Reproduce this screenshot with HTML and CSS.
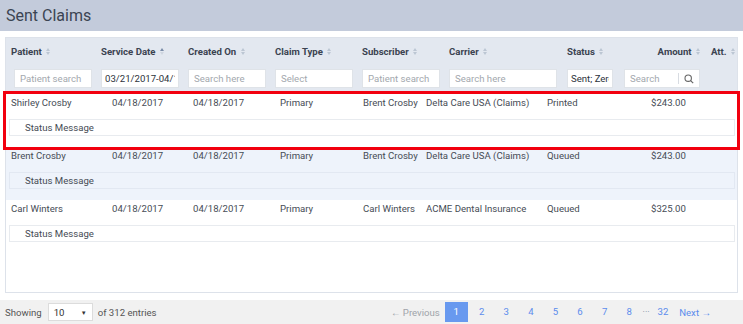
FILE: index.html
```html
<!DOCTYPE html>
<html lang="en">
<head>
    <meta charset="UTF-8">
    <meta name="viewport" content="width=device-width, initial-scale=1.0">
    <title>Sent Claims</title>
    <link rel="stylesheet" href="styles.css">
</head>
<body>
    <div class="page-title">Sent Claims</div>

    <div class="claims-panel">
        <div class="claims-head">
            <div class="head-cols">
                <div class="col-label">Patient <span class="sort"></span></div>
                <div class="col-label">Service Date <span class="sort asc"></span></div>
                <div class="col-label">Created On <span class="sort"></span></div>
                <div class="col-label">Claim Type <span class="sort"></span></div>
                <div class="col-label">Subscriber <span class="sort"></span></div>
                <div class="col-label">Carrier <span class="sort"></span></div>
                <div class="col-label">Status <span class="sort"></span></div>
                <div class="col-label right">Amount <span class="sort"></span></div>
                <div class="col-label">Att. <span class="sort"></span></div>
            </div>
            <div class="head-cols filters">
                <div><input class="first" type="text" placeholder="Patient search"></div>
                <div><input class="filled" type="text" value="03/21/2017-04/18/2017"></div>
                <div><input type="text" placeholder="Search here"></div>
                <div><input type="text" placeholder="Select"></div>
                <div><input type="text" placeholder="Patient search"></div>
                <div><input type="text" placeholder="Search here"></div>
                <div><input class="filled" type="text" value="Sent; Zero"></div>
                <div class="search-box">
                    <span>Search</span>
                    <svg width="10" height="10" viewBox="0 0 10 10"><circle cx="4.2" cy="4.2" r="3.2" fill="none" stroke="#666" stroke-width="1.1"/><line x1="6.6" y1="6.6" x2="9.2" y2="9.2" stroke="#666" stroke-width="1.2"/></svg>
                </div>
                <div></div>
            </div>
        </div>

        <div class="claim-row selected">
            <div class="row-cols">
                <div>Shirley Crosby</div>
                <div>04/18/2017</div>
                <div>04/18/2017</div>
                <div>Primary</div>
                <div>Brent Crosby</div>
                <div>Delta Care USA (Claims)</div>
                <div>Printed</div>
                <div>$243.00</div>
            </div>
            <div class="status-msg">Status Message</div>
        </div>

        <div class="claim-row alt">
            <div class="row-cols">
                <div>Brent Crosby</div>
                <div>04/18/2017</div>
                <div>04/18/2017</div>
                <div>Primary</div>
                <div>Brent Crosby</div>
                <div>Delta Care USA (Claims)</div>
                <div>Queued</div>
                <div>$243.00</div>
            </div>
            <div class="status-msg">Status Message</div>
        </div>

        <div class="claim-row">
            <div class="row-cols">
                <div>Carl Winters</div>
                <div>04/18/2017</div>
                <div>04/18/2017</div>
                <div>Primary</div>
                <div>Carl Winters</div>
                <div>ACME Dental Insurance</div>
                <div>Queued</div>
                <div>$325.00</div>
            </div>
            <div class="status-msg">Status Message</div>
        </div>
    </div>

    <div class="table-footer">
        <div class="showing">
            Showing
            <div class="page-size"><span>10</span><span class="caret">&#9660;</span></div>
            of 312 entries
        </div>
        <div class="pager">
            <span class="prev">&larr; Previous</span>
            <span class="page active">1</span>
            <span class="page">2</span>
            <span class="page">3</span>
            <span class="page">4</span>
            <span class="page">5</span>
            <span class="page">6</span>
            <span class="page">7</span>
            <span class="page">8</span>
            <span class="dots">&middot;&middot;&middot;</span>
            <span class="page">32</span>
            <span class="next">Next &rarr;</span>
        </div>
    </div>
</body>
</html>
```

FILE: styles.css
```css
body {
    margin: 0;
    font-family: Roboto, "Liberation Sans", Arial, sans-serif;
    font-size: 9.6px;
    color: #454b54;
    background: #fff;
    width: 743px;
    height: 324px;
    overflow: hidden;
}
.page-title {
    height: 31px;
    line-height: 31px;
    padding-left: 6px;
    background-color: #c3cbdb;
    color: #3b4452;
    font-size: 16px;
}
.claims-panel {
    margin: 6px 5px 0 5px;
    height: 256px;
    border: 1px solid #dde2ea;
    box-sizing: border-box;
}
.claims-head {
    background-color: #e3e8f0;
    padding: 7px 0 6px 5px;
}
.head-cols {
    display: grid;
    grid-template-columns: 90px 87px 87px 87px 87px 118px 57px 87px 1fr;
}
.col-label {
    font-weight: bold;
    color: #3b4350;
    height: 14px;
    line-height: 14px;
    white-space: nowrap;
}
.col-label.right {
    text-align: right;
    padding-right: 11px;
}
.sort {
    display: inline-flex;
    flex-direction: column;
    gap: 1px;
    margin-left: 2px;
    vertical-align: middle;
    position: relative;
    top: -1px;
}
.sort::before,
.sort::after {
    content: "";
    border-left: 2.5px solid transparent;
    border-right: 2.5px solid transparent;
}
.sort::before {
    border-bottom: 3px solid #bcc6d3;
}
.sort::after {
    border-top: 3px solid #bcc6d3;
}
.sort.asc::before {
    border-bottom-color: #7a8ca8;
}
.sort.asc::after {
    border-top-color: #cfd6e0;
}
.filters {
    margin-top: 10px;
}
.filters input {
    width: 78px;
    height: 19px;
    box-sizing: border-box;
    border: 1px solid #dfe3e8;
    background: #fff;
    padding: 0 5px;
    font-family: inherit;
    font-size: 9.6px;
    color: #333;
    outline: none;
}
.filters input::placeholder {
    color: #a3a8ae;
}
.filters input.first {
    margin-left: 3px;
}
.filters div:nth-child(6) input {
    width: 108px;
}
.filters div:nth-child(7) input {
    width: 46px;
    padding: 0 3px;
}
.filters input.filled {
    color: #2d333b;
    padding: 0 3px;
}
.search-box {
    width: 76px;
    height: 19px;
    box-sizing: border-box;
    border: 1px solid #dfe3e8;
    background: #fff;
    display: flex;
    align-items: center;
    color: #a3a8ae;
    padding-left: 5px;
}
.search-box span {
    flex: 1;
    border-right: 1px solid #d8dce2;
    line-height: 11px;
}
.search-box svg {
    margin: 0 5px;
}
.claim-row {
    padding: 0 2px 0 3px;
    height: 53px;
    box-sizing: border-box;
}
.claim-row.alt {
    background-color: #eef3fb;
}
.claim-row.selected {
    outline: 3px solid #f2000f;
    outline-offset: 0;
    position: relative;
}
.row-cols {
    display: grid;
    grid-template-columns: 101px 81px 87px 83px 63px 121px 104px 1fr;
    padding-left: 2px;
    height: 18px;
    line-height: 18px;
    color: #464c55;
}
.status-msg {
    margin-top: 7px;
    height: 17px;
    line-height: 16px;
    box-sizing: border-box;
    border: 1px solid #e8ebef;
    padding-left: 15px;
    color: #454b54;
}
.claim-row.alt .status-msg {
    border-color: #e2e8f2;
}
.table-footer {
    margin-top: 7px;
    height: 24px;
    background-color: #f1f1f1;
    display: flex;
    align-items: center;
    justify-content: space-between;
    padding: 0 32px 0 5px;
}
.showing {
    display: flex;
    align-items: center;
    color: #555;
}
.page-size {
    width: 45px;
    height: 18px;
    box-sizing: border-box;
    margin: 0 5px 0 6px;
    background: #fff;
    border: 1px solid #dcdcdc;
    display: flex;
    align-items: center;
    justify-content: space-between;
    padding: 0 5px;
    color: #333;
}
.caret {
    font-size: 6px;
    color: #333;
}
.pager {
    display: flex;
    align-items: center;
    color: #5b8ced;
}
.prev {
    color: #a0a4aa;
    margin-right: 5px;
}
.page {
    width: 24.6px;
    text-align: center;
    height: 20px;
    line-height: 20px;
}
.page.active {
    background-color: #6899ef;
    color: #fff;
    width: 23px;
    margin-right: 1.6px;
}
.dots {
    color: #7d8b9d;
    margin: 0 1px;
    font-size: 9px;
}
.next {
    margin-left: 4px;
}
```
